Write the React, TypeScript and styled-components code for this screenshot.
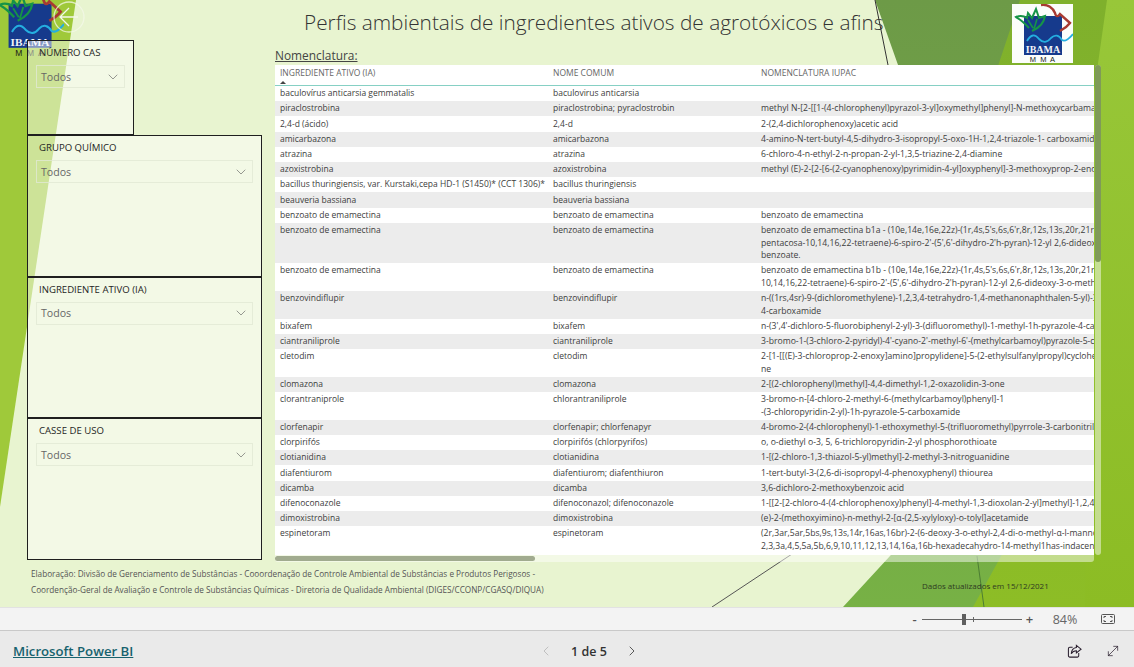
import { ChevronDown, ChevronLeft, ChevronRight, MoveDiagonal } from "lucide-react";
import styled, { createGlobalStyle } from "styled-components";

interface Row {
  name: string;
  common: string;
  iupac: string[];
}

const rows: Row[] = [
  { name: "baculovírus anticarsia gemmatalis", common: "baculovirus anticarsia", iupac: [""] },
  {
    name: "piraclostrobina",
    common: "piraclostrobina; pyraclostrobin",
    iupac: ["methyl N-[2-[[1-(4-chlorophenyl)pyrazol-3-yl]oxymethyl]phenyl]-N-methoxycarbamate"],
  },
  { name: "2,4-d (ácido)", common: "2,4-d", iupac: ["2-(2,4-dichlorophenoxy)acetic acid"] },
  {
    name: "amicarbazona",
    common: "amicarbazona",
    iupac: ["4-amino-N-tert-butyl-4,5-dihydro-3-isopropyl-5-oxo-1H-1,2,4-triazole-1- carboxamide"],
  },
  { name: "atrazina", common: "atrazina", iupac: ["6-chloro-4-n-ethyl-2-n-propan-2-yl-1,3,5-triazine-2,4-diamine"] },
  {
    name: "azoxistrobina",
    common: "azoxistrobina",
    iupac: ["methyl (E)-2-[2-[6-(2-cyanophenoxy)pyrimidin-4-yl]oxyphenyl]-3-methoxyprop-2-enoate"],
  },
  {
    name: "bacillus thuringiensis, var. Kurstaki,cepa HD-1 (S1450)* (CCT 1306)*",
    common: "bacillus thuringiensis",
    iupac: [""],
  },
  { name: "beauveria bassiana", common: "beauveria bassiana", iupac: [""] },
  { name: "benzoato de emamectina", common: "benzoato de emamectina", iupac: ["benzoato de emamectina"] },
  {
    name: "benzoato de emamectina",
    common: "benzoato de emamectina",
    iupac: [
      "benzoato de emamectina b1a - (10e,14e,16e,22z)-(1r,4s,5's,6s,6'r,8r,12s,13s,20r,21r,24s)-21,24-dihydroxy",
      "pentacosa-10,14,16,22-tetraene)-6-spiro-2'-(5',6'-dihydro-2'h-pyran)-12-yl 2,6-dideoxy-3-o-methyl",
      "benzoate.",
    ],
  },
  {
    name: "benzoato de emamectina",
    common: "benzoato de emamectina",
    iupac: [
      "benzoato de emamectina b1b - (10e,14e,16e,22z)-(1r,4s,5's,6s,6'r,8r,12s,13s,20r,21r,24s)-21,24-dihydroxy",
      "10,14,16,22-tetraene)-6-spiro-2'-(5',6'-dihydro-2'h-pyran)-12-yl 2,6-dideoxy-3-o-methyl-4-o-methyl",
    ],
  },
  {
    name: "benzovindiflupir",
    common: "benzovindiflupir",
    iupac: ["n-((1rs,4sr)-9-(dichloromethylene)-1,2,3,4-tetrahydro-1,4-methanonaphthalen-5-yl)-3-(difluoromethyl)", "4-carboxamide"],
  },
  {
    name: "bixafem",
    common: "bixafem",
    iupac: ["n-(3',4'-dichloro-5-fluorobiphenyl-2-yl)-3-(difluoromethyl)-1-methyl-1h-pyrazole-4-carboxamide"],
  },
  {
    name: "ciantraniliprole",
    common: "ciantraniliprole",
    iupac: ["3-bromo-1-(3-chloro-2-pyridyl)-4'-cyano-2'-methyl-6'-(methylcarbamoyl)pyrazole-5-carboxanilide"],
  },
  {
    name: "cletodim",
    common: "cletodim",
    iupac: ["2-[1-[[(E)-3-chloroprop-2-enoxy]amino]propylidene]-5-(2-ethylsulfanylpropyl)cyclohexane-1,3-dio", "ne"],
  },
  { name: "clomazona", common: "clomazona", iupac: ["2-[(2-chlorophenyl)methyl]-4,4-dimethyl-1,2-oxazolidin-3-one"] },
  {
    name: "clorantraniprole",
    common: "chlorantraniliprole",
    iupac: ["3-bromo-n-[4-chloro-2-methyl-6-(methylcarbamoyl)phenyl]-1", "-(3-chloropyridin-2-yl)-1h-pyrazole-5-carboxamide"],
  },
  {
    name: "clorfenapir",
    common: "clorfenapir; chlorfenapyr",
    iupac: ["4-bromo-2-(4-chlorophenyl)-1-ethoxymethyl-5-(trifluoromethyl)pyrrole-3-carbonitrile"],
  },
  {
    name: "clorpirifós",
    common: "clorpirifós (chlorpyrifos)",
    iupac: ["o, o-diethyl o-3, 5, 6-trichloropyridin-2-yl phosphorothioate"],
  },
  {
    name: "clotianidina",
    common: "clotianidina",
    iupac: ["1-[(2-chloro-1,3-thiazol-5-yl)methyl]-2-methyl-3-nitroguanidine"],
  },
  {
    name: "diafentiurom",
    common: "diafentiurom; diafenthiuron",
    iupac: ["1-tert-butyl-3-(2,6-di-isopropyl-4-phenoxyphenyl) thiourea"],
  },
  { name: "dicamba", common: "dicamba", iupac: ["3,6-dichloro-2-methoxybenzoic acid"] },
  {
    name: "difenoconazole",
    common: "difenoconazol; difenoconazole",
    iupac: ["1-[[2-[2-chloro-4-(4-chlorophenoxy)phenyl]-4-methyl-1,3-dioxolan-2-yl]methyl]-1,2,4-triazole"],
  },
  {
    name: "dimoxistrobina",
    common: "dimoxistrobina",
    iupac: ["(e)-2-(methoxyimino)-n-methyl-2-[α-(2,5-xylyloxy)-o-tolyl]acetamide"],
  },
  {
    name: "espinetoram",
    common: "espinetoram",
    iupac: [
      "(2r,3ar,5ar,5bs,9s,13s,14r,16as,16br)-2-(6-deoxy-3-o-ethyl-2,4-di-o-methyl-α-l-mannopyranosyloxy)",
      "2,3,3a,4,5,5a,5b,6,9,10,11,12,13,14,16a,16b-hexadecahydro-14-methyl1has-indaceno[3,2-d]",
    ],
  },
];

const filters = [
  { label: "NÚMERO CAS", narrow: true },
  { label: "GRUPO QUÍMICO", narrow: false },
  { label: "INGREDIENTE ATIVO (IA)", narrow: false },
  { label: "CASSE DE USO", narrow: false },
];

function Facets() {
  return (
    <BackgroundArt viewBox="0 0 1134 607" preserveAspectRatio="none" aria-hidden="true">
      <defs>
        <linearGradient id="dark" x1="0" y1="0" x2="0" y2="1">
          <stop offset="0" stopColor="#6d9a47" />
          <stop offset="1" stopColor="#77b145" />
        </linearGradient>
        <linearGradient id="mid" x1="0" y1="0" x2="0" y2="1">
          <stop offset="0" stopColor="#7fb02c" />
          <stop offset="1" stopColor="#8dbd26" />
        </linearGradient>
        <linearGradient id="bright" x1="0" y1="0" x2="0" y2="1">
          <stop offset="0" stopColor="#98c739" />
          <stop offset="1" stopColor="#8cbc24" />
        </linearGradient>
      </defs>
      <polygon points="0,0 76,0 0,507" fill="#9fc93a" />
      <polygon points="875,0 1134,0 1134,607 843,607 960,480 960,240" fill="url(#dark)" />
      <polygon points="1020,0 1134,0 1134,607 973,607 1010,540 980,120" fill="url(#mid)" />
      <polygon points="1107,0 1134,0 1134,607 1085,607 1090,120" fill="url(#bright)" />
      <line x1="875" y1="0" x2="888" y2="65" stroke="#333" />
      <line x1="712" y1="607" x2="792" y2="554" stroke="#555" />
      <line x1="977" y1="556" x2="984" y2="607" stroke="#4c7d33" />
    </BackgroundArt>
  );
}

function IbamaMark({ plain }: { plain?: boolean }) {
  return (
    <svg viewBox="0 0 61 59" width="100%" height="100%">
      {!plain && <rect width="61" height="59" fill="#fbfdfb" />}
      <rect x="12" y="12" width="38" height="39" fill="#163a8c" />
      <path
        d="M17 24 C9 15 5 14 4 13 C9 11 12 12 15 14 L16 9 L20 14 L24 5 L27 14 L33 12 C32 19 27 24 20 27"
        fill="none"
        stroke="#169447"
        strokeWidth="2"
      />
      <path d="M16 16 L21 24 M25 15 L22 25" stroke="#169447" strokeWidth="1.6" fill="none" />
      <path
        d="M29 1 C36 0 41 4 43 9 C44 13 46 13 48 10 L58 19 C55 23 52 25 48 27"
        fill="none"
        stroke="#a83a32"
        strokeWidth="2.4"
      />
      <path
        d="M15 37 C19 30 23 30 27 35 C31 39 35 39 39 34 C43 30 47 31 50 36 C53 38 56 36 61 30"
        fill="none"
        stroke="#24aee0"
        strokeWidth="1.8"
      />
      <IbamaText x="31" y="49">
        IBAMA
      </IbamaText>
      <MmaText x="31" y="58">
        M M A
      </MmaText>
    </svg>
  );
}

function ShareIcon() {
  return (
    <svg viewBox="0 0 16 16" width="15" height="15" fill="none" stroke="#2a1f2f" strokeWidth="1.1" aria-hidden="true">
      <path d="M6 3.5H3a1.5 1.5 0 0 0-1.5 1.5v7.5A1.5 1.5 0 0 0 3 14h8a1.5 1.5 0 0 0 1.5-1.5V9.5" />
      <path d="M10 1.5 15 5.5 10 9.5V7.2C7.5 7.2 5.8 8.2 4.5 10.5 4.8 7 6.6 4.2 10 3.8Z" />
    </svg>
  );
}

function FitIcon() {
  return (
    <svg viewBox="0 0 14 10" width="14" height="10" fill="none" stroke="#555" strokeWidth="1" aria-hidden="true">
      <rect x="0.5" y="0.5" width="13" height="9" rx="1" />
      <path d="M3 4V2.5h2M9 2.5h2V4M11 6v1.5H9M5 7.5H3V6" />
    </svg>
  );
}

export default function App() {
  return (
    <Page>
      <GlobalStyle />
      <Canvas>
        <Facets />
        <LeftLogo>
          <IbamaMark plain />
        </LeftLogo>
        <BackButton>
          <svg viewBox="0 0 32 32" width="32" height="32" fill="none" stroke="#f4f8ea" strokeWidth="1.3" aria-hidden="true">
            <circle cx="16" cy="16" r="15" opacity="0.75" />
            <path d="M16 7 7 16l9 9M7 16h18" />
          </svg>
        </BackButton>
        <Header>
          <Title>Perfis ambientais de ingredientes ativos de agrotóxicos e afins</Title>
          <RightLogo>
            <IbamaMark />
          </RightLogo>
        </Header>
        <Body>
          <Sidebar>
            {filters.map((filter) => (
              <FilterPanel key={filter.label} $narrow={filter.narrow}>
                <FilterLabel>{filter.label}</FilterLabel>
                <Dropdown>
                  Todos
                  <ChevronDown size={16} strokeWidth={0.9} color="#555" />
                </Dropdown>
              </FilterPanel>
            ))}
          </Sidebar>
          <Content>
            <SectionTitle>Nomenclatura:</SectionTitle>
            <TableFrame>
              <TableColumn>
                <TableViewport>
                  <HeaderRow>
                    <HeaderCell>
                      INGREDIENTE ATIVO (IA)
                      <SortMark />
                    </HeaderCell>
                    <HeaderCell>NOME COMUM</HeaderCell>
                    <HeaderCell>NOMENCLATURA IUPAC</HeaderCell>
                  </HeaderRow>
                  {rows.map((row, index) => (
                    <DataRow key={index} $odd={index % 2 === 1}>
                      <Cell>{row.name}</Cell>
                      <Cell>{row.common}</Cell>
                      <Cell>
                        {row.iupac.map((line, lineIndex) => (
                          <CellLine key={lineIndex}>{line}</CellLine>
                        ))}
                      </Cell>
                    </DataRow>
                  ))}
                </TableViewport>
                <HorizontalTrack>
                  <HorizontalThumb />
                </HorizontalTrack>
              </TableColumn>
              <VerticalTrack>
                <VerticalThumb />
              </VerticalTrack>
            </TableFrame>
          </Content>
        </Body>
        <Notes>
          <Credits>
            Elaboração: Divisão de Gerenciamento de Substâncias - Cooordenação de Controle Ambiental de Substâncias e
            Produtos Perigosos -
            <br />
            Coordenção-Geral de Avaliação e Controle de Substâncias Químicas - Diretoria de Qualidade Ambiental
            (DIGES/CCONP/CGASQ/DIQUA)
          </Credits>
          <Updated>Dados atualizados em 15/12/2021</Updated>
        </Notes>
      </Canvas>
      <ZoomBar>
        <ZoomSign>-</ZoomSign>
        <ZoomSlider>
          <ZoomTick />
          <ZoomHandle />
        </ZoomSlider>
        <ZoomSign>+</ZoomSign>
        <ZoomValue>84%</ZoomValue>
        <FitIcon />
      </ZoomBar>
      <Footer>
        <BrandLink href="#">Microsoft Power BI</BrandLink>
        <Pager>
          <ChevronLeft size={16} strokeWidth={1.2} color="#b5b5b5" />
          <PageLabel>1 de 5</PageLabel>
          <ChevronRight size={16} strokeWidth={1.2} color="#333" />
        </Pager>
        <FooterActions>
          <ShareIcon />
          <MoveDiagonal size={16} strokeWidth={1.1} color="#2a1f2f" />
        </FooterActions>
      </Footer>
    </Page>
  );
}

const GlobalStyle = createGlobalStyle`
  html, body {
    margin: 0;
    padding: 0;
    height: 100%;
    overflow: hidden;
    background: #eaeaea;
    font-family: "Open Sans", "Liberation Sans", sans-serif;
  }
`;

const Page = styled.div`
  width: 1134px;
  height: 667px;
  display: flex;
  flex-direction: column;
`;

const Canvas = styled.main`
  position: relative;
  height: 607px;
  flex: none;
  display: flex;
  flex-direction: column;
  overflow: hidden;
  background: #e8f4d0;
`;

const BackgroundArt = styled.svg`
  position: absolute;
  inset: 0;
  width: 100%;
  height: 100%;
`;

const LeftLogo = styled.div`
  position: absolute;
  left: -5px;
  top: -10px;
  width: 69px;
  height: 67px;
`;

const BackButton = styled.div`
  position: absolute;
  left: 53px;
  top: 1px;
  width: 32px;
  height: 32px;
`;

const Header = styled.header`
  position: relative;
  height: 40px;
  flex: none;
  display: flex;
  align-items: flex-start;
`;

const Title = styled.h1`
  margin: 7px 0 0 304px;
  font-size: 20.8px;
  line-height: 30px;
  font-weight: 300;
  color: #333;
  white-space: nowrap;
`;

const RightLogo = styled.div`
  position: absolute;
  top: 4px;
  left: 1012px;
  width: 61px;
  height: 59px;
`;

const IbamaText = styled.text`
  font-family: "Liberation Serif", serif;
  font-size: 10px;
  font-weight: 700;
  fill: #f2f4f8;
  text-anchor: middle;
`;

const MmaText = styled.text`
  font-family: "Liberation Sans", sans-serif;
  font-size: 7.5px;
  letter-spacing: 1px;
  fill: #1a1a1a;
  text-anchor: middle;
`;

const Body = styled.div`
  position: relative;
  height: 522px;
  flex: none;
  display: flex;
  gap: 13px;
  padding-left: 27px;
`;

const Sidebar = styled.aside`
  width: 235px;
  flex: none;
  display: flex;
  flex-direction: column;
`;

const FilterPanel = styled.section<{ $narrow: boolean }>`
  box-sizing: border-box;
  width: ${(props) => (props.$narrow ? "107px" : "235px")};
  height: ${(props) => (props.$narrow ? "95px" : "141.5px")};
  padding: 5px 8px 0;
  border: 1px solid #1f1f1f;
  border-bottom-width: 1.5px;
  background: rgba(255, 255, 255, 0.48);
`;

const FilterLabel = styled.div`
  margin-left: 3px;
  height: 14px;
  font-size: 9.6px;
  line-height: 14px;
  color: #252525;
  white-space: nowrap;
`;

const Dropdown = styled.div`
  box-sizing: border-box;
  height: 23px;
  margin-top: 5px;
  padding: 0 3px 0 4px;
  display: flex;
  align-items: center;
  justify-content: space-between;
  border: 1px solid rgba(225, 232, 212, 0.8);
  font-size: 10.6px;
  color: #666;
`;

const Content = styled.div`
  flex: 1;
  min-width: 0;
  display: flex;
  flex-direction: column;
`;

const SectionTitle = styled.div`
  margin-top: 6px;
  height: 19px;
  font-size: 11.9px;
  line-height: 19px;
  color: #444;
  text-decoration: underline;
`;

const TableFrame = styled.div`
  display: flex;
  align-items: flex-start;
`;

const TableColumn = styled.div`
  width: 819px;
  flex: none;
`;

const TableViewport = styled.div`
  height: 490px;
  overflow: hidden;
  background: #fff;
`;

const HeaderRow = styled.div`
  height: 20px;
  display: grid;
  grid-template-columns: 273px 208px 338px;
  border-bottom: 1px solid #86d0c4;
`;

const HeaderCell = styled.div`
  position: relative;
  padding: 2px 0 0 5px;
  font-size: 8.5px;
  line-height: 12px;
  color: #666;
  white-space: nowrap;
`;

const SortMark = styled.span`
  position: absolute;
  left: 5px;
  top: 16px;
  border-left: 3px solid transparent;
  border-right: 3px solid transparent;
  border-bottom: 3px solid #444;
`;

const DataRow = styled.div<{ $odd: boolean }>`
  display: grid;
  grid-template-columns: 273px 208px 338px;
  padding: 1.3px 0;
  background: ${(props) => (props.$odd ? "#ececec" : "#fff")};
`;

const Cell = styled.div`
  min-width: 0;
  overflow: hidden;
  padding-left: 5px;
  font-size: 8.5px;
  line-height: 12.6px;
  color: #3d3d3d;
  white-space: nowrap;
`;

const CellLine = styled.div`
  min-height: 12.6px;
  font-size: 8.65px;
`;

const HorizontalTrack = styled.div`
  height: 7px;
  padding-top: 1px;
  box-sizing: border-box;
  background: rgba(255, 255, 255, 0.48);
  border-radius: 0 0 3px 3px;
`;

const HorizontalThumb = styled.div`
  width: 260px;
  height: 5px;
  border-radius: 3px;
  background: #a1ab8f;
`;

const VerticalTrack = styled.div`
  width: 6px;
  height: 490px;
  margin-left: 1px;
  border-radius: 3px;
  background: rgba(255, 255, 255, 0.48);
`;

const VerticalThumb = styled.div`
  height: 197px;
  border-radius: 3px;
  background: #7f9a58;
`;

const Notes = styled.div`
  position: relative;
  flex: 1;
  display: flex;
  padding-left: 31px;
`;

const Credits = styled.p`
  margin: 4px 0 0;
  width: 891px;
  flex: none;
  font-size: 8.2px;
  line-height: 16px;
  color: #555;
  white-space: nowrap;
`;

const Updated = styled.div`
  margin-top: 17px;
  font-size: 8px;
  line-height: 14px;
  color: #2f3b22;
  white-space: nowrap;
`;

const ZoomBar = styled.div`
  box-sizing: border-box;
  height: 24px;
  flex: none;
  display: flex;
  align-items: center;
  justify-content: flex-end;
  padding-right: 19px;
  background: #f3f3f3;
  border-top: 1px solid #e2e2e2;
  border-bottom: 1px solid #c9c9c9;
`;

const ZoomSign = styled.span`
  width: 11px;
  text-align: center;
  font-size: 13px;
  line-height: 14px;
  font-weight: 600;
  color: #555;
`;

const ZoomSlider = styled.div`
  position: relative;
  width: 100px;
  height: 1px;
  margin: 0 2px;
  background: #666;
`;

const ZoomTick = styled.span`
  position: absolute;
  left: 51px;
  top: -2px;
  width: 1px;
  height: 5px;
  background: #666;
`;

const ZoomHandle = styled.span`
  position: absolute;
  left: 40px;
  top: -5px;
  width: 4px;
  height: 11px;
  background: #5f5f5f;
`;

const ZoomValue = styled.span`
  width: 40px;
  margin: 0 16px 0 10px;
  text-align: center;
  font-size: 12.5px;
  color: #666;
`;

const Footer = styled.footer`
  flex: 1;
  display: flex;
  align-items: center;
  padding: 4px 13px 0;
  background: #eaeaea;
`;

const BrandLink = styled.a`
  width: 525px;
  flex: none;
  font-size: 13.2px;
  font-weight: 600;
  color: #17626e;
`;

const Pager = styled.nav`
  display: flex;
  align-items: center;
  gap: 17px;
`;

const PageLabel = styled.span`
  font-size: 12.5px;
  font-weight: 600;
  color: #333;
`;

const FooterActions = styled.div`
  margin-left: auto;
  display: flex;
  align-items: center;
  gap: 23px;
`;
